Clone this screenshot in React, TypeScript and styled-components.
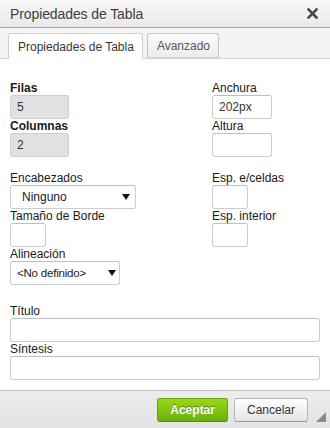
import React from "react";
import styled, { createGlobalStyle } from "styled-components";

const Global = createGlobalStyle`
  html, body { margin: 0; padding: 0; background: #fff; }
  body { font-family: "Liberation Sans", Arial, sans-serif; font-size: 12px; color: #000; }
  * { box-sizing: border-box; }
`;

const Dialog = styled.div`
  width: 330px;
  height: 428px;
  display: flex;
  flex-direction: column;
  background: #fff;
  position: relative;
  overflow: hidden;
`;

const TitleBar = styled.div`
  height: 28px;
  flex: none;
  display: flex;
  align-items: center;
  justify-content: space-between;
  padding: 0 12px 0 10px;
  background: linear-gradient(#f7f7f7, #e9e9e9);
  border-bottom: 1px solid #a8a8a8;
`;

const Title = styled.div`
  font-size: 14px;
  font-weight: normal;
  color: #3a3a3a;
  text-shadow: 0 1px 0 rgba(255, 255, 255, 0.75);
  padding-top: 1px;
  letter-spacing: -0.1px;
`;

const Close = styled.svg`
  width: 11px;
  height: 11px;
  margin-top: 0px;
`;

const TabBar = styled.div`
  height: 31px;
  flex: none;
  display: flex;
  align-items: flex-end;
  gap: 4px;
  padding-left: 8px;
  background: #f4f4f4;
  border-bottom: 1px solid #d4d4d4;
`;

const Tab = styled.div<{ $active?: boolean }>`
  height: ${(p) => (p.$active ? "26px" : "25px")};
  margin-bottom: ${(p) => (p.$active ? "-1px" : "0")};
  display: flex;
  align-items: center;
  padding: 0 8px 0 9px;
  font-size: 12px;
  color: ${(p) => (p.$active ? "#383838" : "#595959")};
  background: ${(p) => (p.$active ? "#fff" : "linear-gradient(#fbfbfb, #ececec)")};
  border: 1px solid ${(p) => (p.$active ? "#d0d0d0" : "#c4c4c4")};
  border-bottom: ${(p) => (p.$active ? "none" : "1px solid #d4d4d4")};
  border-radius: 3px 3px 0 0;
`;

const Body = styled.div`
  flex: 1;
  padding: 22px 10px 0 10px;
  display: flex;
  flex-direction: column;
`;

const TwoCols = styled.div<{ $gap?: number }>`
  display: grid;
  grid-template-columns: 202px 1fr;
  margin-top: ${(p) => p.$gap ?? 0}px;
`;

const Col = styled.div`
  display: flex;
  flex-direction: column;
  align-items: flex-start;
`;

const Stack = styled.div<{ $gap?: number }>`
  display: flex;
  flex-direction: column;
  margin-top: ${(p) => p.$gap ?? 0}px;
`;

const Label = styled.label<{ $strong?: boolean }>`
  display: block;
  height: 14px;
  line-height: 14px;
  font-size: 12px;
  color: #1a1a1a;
  font-weight: ${(p) => (p.$strong ? "bold" : "normal")};
  white-space: nowrap;
`;

const Input = styled.div<{ $w?: number; $disabled?: boolean }>`
  width: ${(p) => (p.$w ? `${p.$w}px` : "100%")};
  height: 24px;
  display: flex;
  align-items: center;
  padding: 0 6px;
  font-size: 12px;
  color: #333;
  background: ${(p) => (p.$disabled ? "#e1e1e1" : "#fff")};
  border: 1px solid ${(p) => (p.$disabled ? "#d2d2d2" : "#cbcdd0")};
  border-top-color: ${(p) => (p.$disabled ? "#cdcdcd" : "#bcc0c4")};
  border-radius: 3px;
`;

const Select = styled.div<{ $w: number; $pl: number; $pr: number }>`
  width: ${(p) => p.$w}px;
  height: 24px;
  display: flex;
  align-items: center;
  justify-content: space-between;
  padding: 0 ${(p) => p.$pr}px 0 ${(p) => p.$pl}px;
  font-size: 12px;
  color: #222;
  background: #fff;
  border: 1px solid #cbcdd0;
  border-top-color: #bcc0c4;
  border-radius: 3px;
`;

const SmallText = styled.span`
  font-size: 11.5px;
  letter-spacing: -0.2px;
`;

const Arrow = styled.svg`
  width: 8px;
  height: 6px;
`;

const Footer = styled.div`
  height: 38px;
  flex: none;
  display: flex;
  align-items: center;
  justify-content: flex-end;
  gap: 6px;
  padding: 1px 22px 0 0;
  background: linear-gradient(#ededed, #e3e3e3);
  border-top: 1px solid #bdbdbd;
`;

const Button = styled.div<{ $ok?: boolean }>`
  height: 24px;
  display: flex;
  align-items: center;
  justify-content: center;
  padding: 0 12px;
  font-size: 12px;
  border-radius: 3px;
  font-weight: ${(p) => (p.$ok ? "bold" : "normal")};
  color: ${(p) => (p.$ok ? "#fff" : "#333")};
  text-shadow: ${(p) => (p.$ok ? "0 -1px 0 #55830c" : "0 1px 0 rgba(255,255,255,.5)")};
  background: ${(p) =>
    p.$ok ? "linear-gradient(#9ad717, #69b10b)" : "linear-gradient(#fff, #e4e4e4)"};
  border: 1px solid ${(p) => (p.$ok ? "#62a60a" : "#b6b6b6")};
  border-bottom-color: ${(p) => (p.$ok ? "#4d9200" : "#999")};
`;

const Grip = styled.svg`
  position: absolute;
  right: 4px;
  bottom: 6px;
  width: 10px;
  height: 10px;
`;

function Field(props: {
  label: string;
  strong?: boolean;
  children: React.ReactNode;
}) {
  return (
    <Col>
      <Label $strong={props.strong}>{props.label}</Label>
      {props.children}
    </Col>
  );
}

function DownArrow() {
  return (
    <Arrow viewBox="0 0 8 6">
      <path d="M0 0 H8 L4 6 Z" fill="#111" />
    </Arrow>
  );
}

export default function App() {
  return (
    <Dialog>
      <Global />
      <TitleBar>
        <Title>Propiedades de Tabla</Title>
        <Close viewBox="0 0 11 11">
          <path d="M1.5 1.5 L9.5 9.5 M9.5 1.5 L1.5 9.5" stroke="#4a4a4a" strokeWidth="2.6" strokeLinecap="square" />
        </Close>
      </TitleBar>
      <TabBar>
        <Tab $active>Propiedades de Tabla</Tab>
        <Tab>Avanzado</Tab>
      </TabBar>
      <Body>
        <TwoCols>
          <Col>
            <Field label="Filas" strong>
              <Input $w={59} $disabled>5</Input>
            </Field>
            <Field label="Columnas" strong>
              <Input $w={59} $disabled>2</Input>
            </Field>
          </Col>
          <Col>
            <Field label="Anchura">
              <Input $w={60}>202px</Input>
            </Field>
            <Field label="Altura">
              <Input $w={60} />
            </Field>
          </Col>
        </TwoCols>
        <TwoCols $gap={14}>
          <Col>
            <Field label="Encabezados">
              <Select $w={126} $pl={11} $pr={5}>
                <span>Ninguno</span>
                <DownArrow />
              </Select>
            </Field>
            <Field label="Tamaño de Borde">
              <Input $w={36} />
            </Field>
            <Field label="Alineación">
              <Select $w={110} $pl={6} $pr={3}>
                <SmallText>&lt;No definido&gt;</SmallText>
                <DownArrow />
              </Select>
            </Field>
          </Col>
          <Col>
            <Field label="Esp. e/celdas">
              <Input $w={36} />
            </Field>
            <Field label="Esp. interior">
              <Input $w={36} />
            </Field>
          </Col>
        </TwoCols>
        <Stack $gap={19}>
          <Label>Título</Label>
          <Input />
          <Label>Síntesis</Label>
          <Input />
        </Stack>
      </Body>
      <Footer>
        <Button $ok>Aceptar</Button>
        <Button>Cancelar</Button>
      </Footer>
      <Grip viewBox="0 0 10 10">
        <path d="M10 0 V10 H0 Z" fill="#8a8a8a" />
      </Grip>
    </Dialog>
  );
}
